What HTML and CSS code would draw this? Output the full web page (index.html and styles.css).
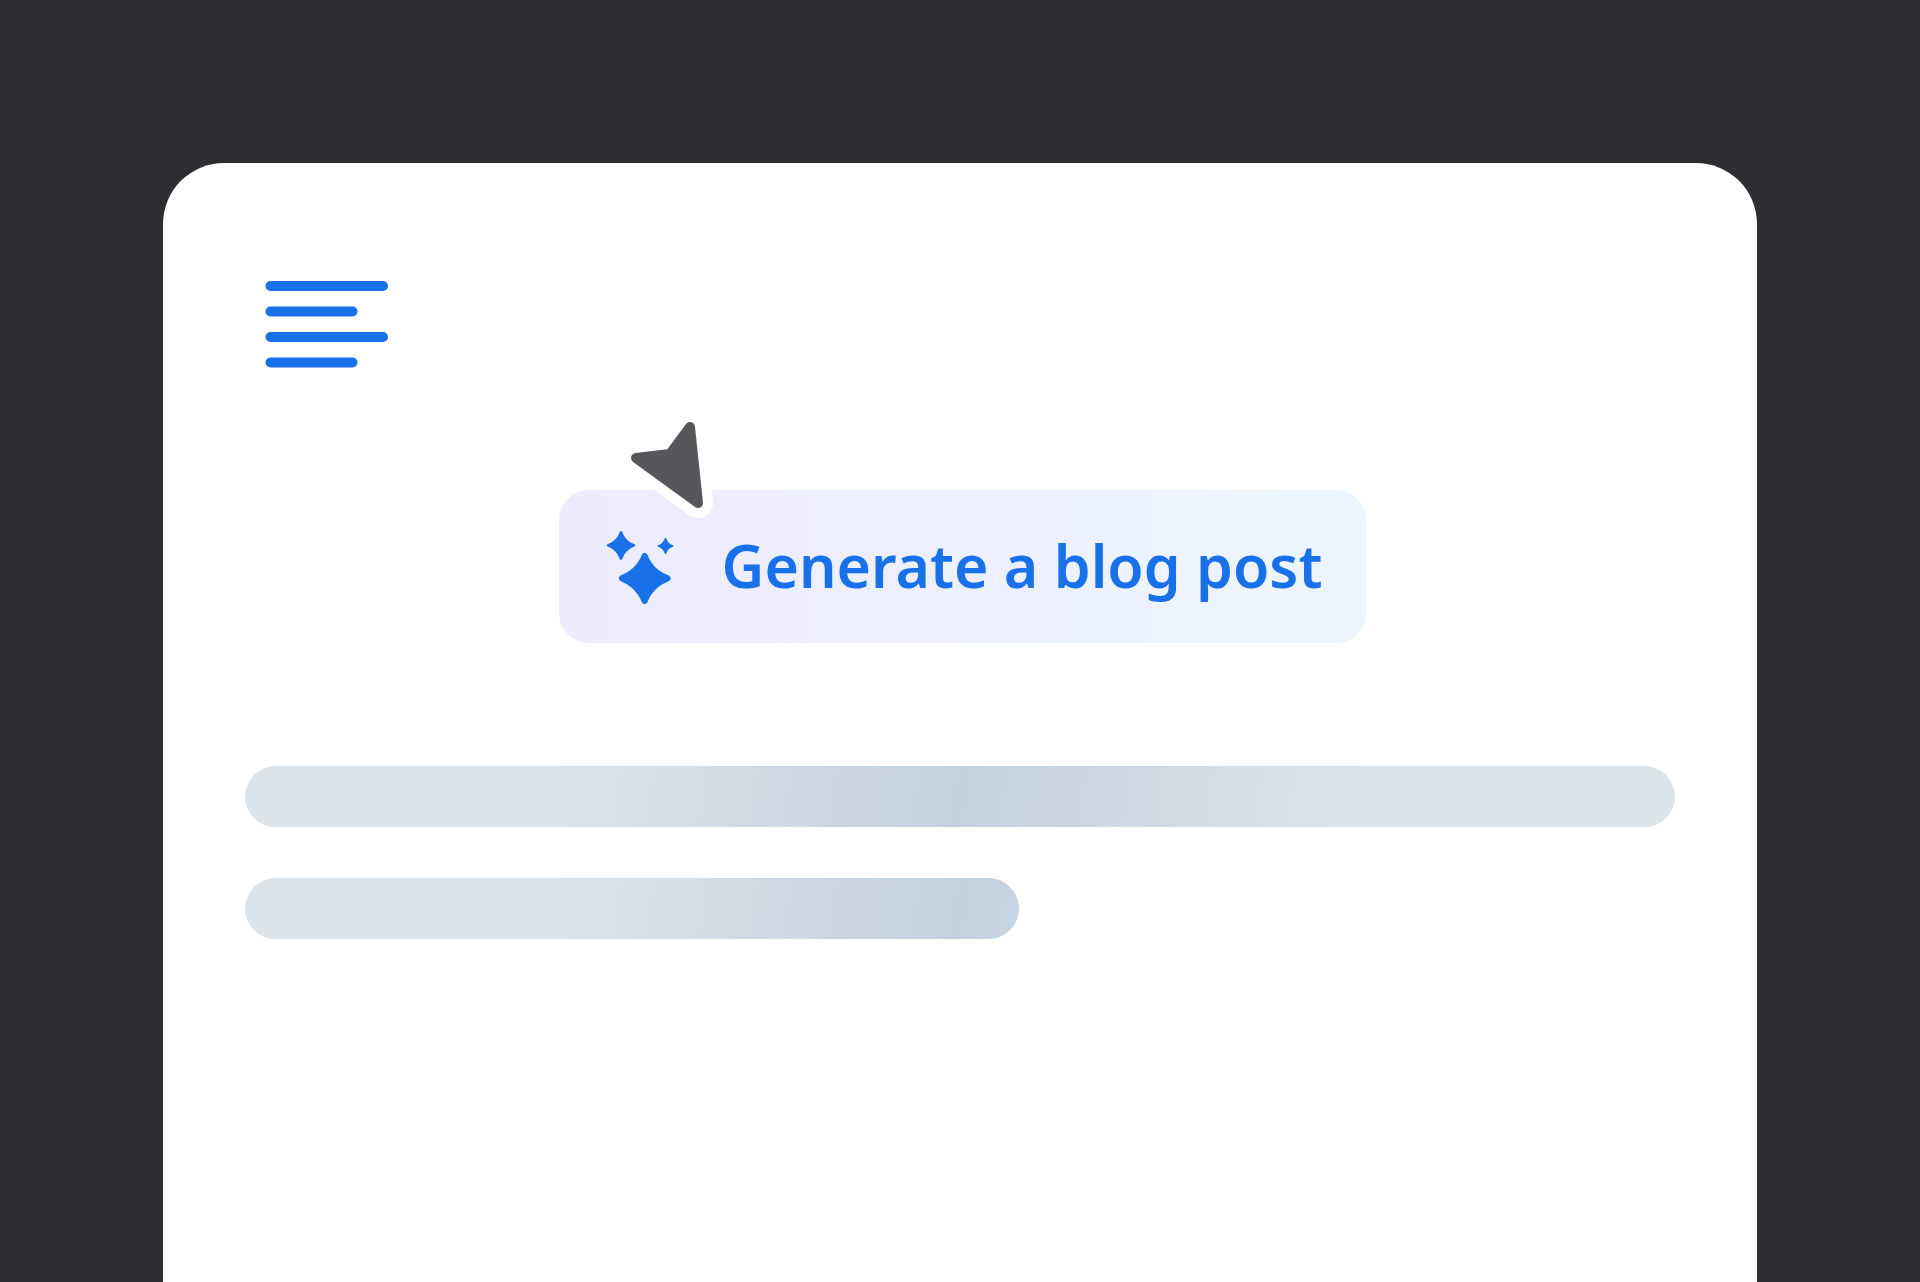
FILE: index.html
```html
<!DOCTYPE html>
<html lang="en">
<head>
<meta charset="utf-8">
<meta name="viewport" content="width=device-width, initial-scale=1">
<title>Generate a blog post</title>
<link rel="stylesheet" href="styles.css">
</head>
<body class="page">
<main class="card">
  <header class="card-header">
    <svg class="doc-icon" viewBox="0 0 124 86" aria-hidden="true">
      <path d="M5.500 5H118M5.500 30.500H87.500M5.500 56H118M5.500 81.500H87.500"/>
    </svg>
  </header>
  <div class="prompt">
    <button class="generate" type="button">
      <svg class="sparkles" viewBox="606 530 67 76" aria-hidden="true">
        <path d="M642 554.500Q644.700 551 647.400 554.500C651 565 659 572 669 575.500Q672.500 578.500 669 581C659 585 651 592 647.400 602.500Q644.700 606 642 602.500C638 592 630 585 620.500 581Q617 578.500 620.500 575.500C630 572 638 565 642 554.500Z"/>
        <path d="M619.700 532Q621 530 622.300 532C624.500 538 628.500 542 634.300 544Q636.300 545.300 634.300 546.600C628.500 549 624.500 553 622.300 559Q621 561 619.700 559C617.500 553 613.500 549 607.700 546.600Q605.700 545.300 607.700 544C613.500 542 617.500 538 619.700 532Z"/>
        <path d="M664.700 538.500Q665.500 537 666.300 538.500C667.500 542 669.500 544 673 545.200Q674.500 546 673 546.800C669.500 548 667.500 550 666.300 553.500Q665.500 555 664.700 553.500C663.500 550 661.500 548 658 546.800Q656.500 546 658 545.200C661.500 544 663.500 542 664.700 538.500Z"/>
      </svg>
      <span class="generate-label">Generate a blog post</span>
      <svg class="cursor" viewBox="620 410 96 112" aria-hidden="true">
        <path class="cursor-halo" d="M690 427L698 503L636 458L670 454Z"/>
        <path class="cursor-arrow" d="M690 427L698 503L636 458L670 454Z"/>
      </svg>
    </button>
  </div>
  <div class="skeleton" aria-hidden="true">
    <div class="line"></div>
    <div class="line line-short"></div>
  </div>
</main>
</body>
</html>
```
FILE: styles.css
```css
*, *::before, *::after {
  box-sizing: border-box;
}

.page {
  margin: 0;
  min-height: 100vh;
  display: flex;
  flex-direction: column;
  padding: 163px 163px 0;
  background: #2d2e32;
  font-family: "Noto Sans", "Liberation Sans", sans-serif;
}

.card {
  flex: 1;
  display: flex;
  flex-direction: column;
  gap: 123px;
  padding: 118px 82px;
  border-radius: 61px 61px 0 0;
  background: #fff;
}

.card-header {
  display: flex;
  padding-left: 20px;
}

.doc-icon {
  width: 124px;
  height: 86px;
  fill: none;
  stroke: #1871e8;
  stroke-width: 10;
  stroke-linecap: round;
  overflow: visible;
}

.prompt {
  display: flex;
  justify-content: center;
  padding-left: 5px;
}

.generate {
  position: relative;
  display: flex;
  align-items: center;
  gap: 49px;
  height: 153px;
  padding: 2px 44px 0 47px;
  border: 0;
  border-radius: 30px;
  background: linear-gradient(90deg, #eeebff, #ecf5ff);
  color: #1871e8;
  font: 600 59px/76px "Noto Sans", "Liberation Sans", sans-serif;
  white-space: nowrap;
  cursor: pointer;
}

.generate-label {
  padding-bottom: 6px;
}

.sparkles {
  flex: none;
  width: 67px;
  height: 76px;
  fill: currentColor;
  overflow: visible;
}

.cursor {
  position: absolute;
  left: 61px;
  top: -80px;
  width: 96px;
  height: 112px;
  stroke-linejoin: round;
}

.cursor-halo {
  fill: #fff;
  stroke: #fff;
  stroke-width: 30;
}

.cursor-arrow {
  fill: #56575a;
  stroke: #56575a;
  stroke-width: 10;
}

.skeleton {
  container-type: inline-size;
  display: flex;
  flex-direction: column;
  gap: 51px;
}

.line {
  height: 61px;
  border-radius: 31px;
  background: linear-gradient(98deg, #dce4eb 20%, #c3d1df 50%, #dce4eb 79%) 0 0 / 100cqw 100%;
}

.line-short {
  width: 54.1%;
}
```
